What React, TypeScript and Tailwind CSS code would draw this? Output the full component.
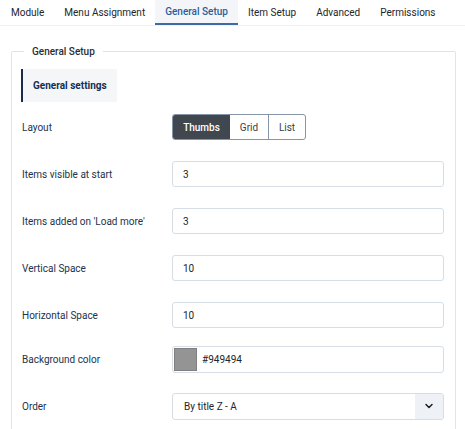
import React from 'react';

const tabs = ['Module', 'Menu Assignment', 'General Setup', 'Item Setup', 'Advanced', 'Permissions'];

const Row: React.FC<{ label: string; children: React.ReactNode; gap?: string }> = ({ label, children, gap = 'mb-[21px]' }) => (
  <div className={`flex items-center h-[26px] ${gap}`}>
    <div className="w-[151px] shrink-0 pl-[1px] text-[10px] text-[#22324a]">{label}</div>
    <div className="flex-1">{children}</div>
  </div>
);

const TextInput: React.FC<{ value: string }> = ({ value }) => (
  <div className="h-[26px] w-[272px] border border-[#d7dde5] rounded-[3px] bg-white flex items-center px-[10px] text-[10px] text-[#22262a]">
    {value}
  </div>
);

export default function App() {
  return (
    <div className="w-[465px] h-[429px] bg-white overflow-hidden font-['Roboto',sans-serif]">
      {/* Tabs */}
      <div className="flex h-[26px] border-b border-[#eef1f5] pl-[1px]">
        {tabs.map((t) => {
          const active = t === 'General Setup';
          return (
            <div
              key={t}
              className={`px-[10px] flex items-center whitespace-nowrap text-[10px] ${
                active
                  ? 'bg-[#f3f5f8] text-[#2c5d9a] border-b-2 border-[#3e6ba6] font-medium'
                  : 'text-[#22262a]'
              }`}
            >
              {t}
            </div>
          );
        })}
      </div>

      {/* Fieldset */}
      <fieldset className="mt-[18px] ml-[11px] w-[445px] border border-[#dfe4ea] rounded-[2px] px-[9px] pt-[10px] pb-[10px]">
        <legend className="ml-[3px] px-[8px] text-[10px] font-medium text-[#2a2e33]">General Setup</legend>

        <div className="inline-flex items-center h-[33px] bg-[#f5f6f8] border-l-2 border-[#1b2b4b] pl-[10px] pr-[10px] text-[10px] font-bold text-[#132f53]">
          General settings
        </div>

        <div className="mt-[12px]">
          <Row label="Layout">
            <div className="inline-flex h-[26px] rounded-[3px] border border-[#8795a8] overflow-hidden text-[10px]">
              <div className="w-[57px] flex items-center justify-center bg-[#41474e] text-white font-medium">Thumbs</div>
              <div className="w-[39px] flex items-center justify-center text-[#3a3f44] border-r border-[#8795a8]">Grid</div>
              <div className="w-[36px] flex items-center justify-center text-[#3a3f44]">List</div>
            </div>
          </Row>
          <Row label="Items visible at start">
            <TextInput value="3" />
          </Row>
          <Row label="Items added on 'Load more'">
            <TextInput value="3" />
          </Row>
          <Row label="Vertical Space">
            <TextInput value="10" />
          </Row>
          <Row label="Horizontal Space" gap="mb-[18px]">
            <TextInput value="10" />
          </Row>
          <Row label="Background color">
            <div className="h-[27px] w-[272px] border border-[#d7dde5] rounded-[3px] bg-white flex items-center pl-[1px] text-[10px] text-[#22262a]">
              <div className="w-[23px] h-[23px] bg-[#949494] border border-[#7f7f7f] mr-[5px]" />
              #949494
            </div>
          </Row>
          <Row label="Order">
            <div className="h-[27px] w-[272px] border border-[#d7dde5] rounded-[3px] bg-white flex items-center text-[10px] text-[#22262a] overflow-hidden">
              <div className="flex-1 pl-[11px]">By title Z - A</div>
              <div className="w-[28px] h-full bg-[#eef1f6] flex items-center justify-center">
                <svg width="10" height="10" viewBox="0 0 10 10" fill="none">
                  <path d="M2 3.5 L5 6.5 L8 3.5" stroke="#1c1f24" strokeWidth="1.5" strokeLinecap="round" strokeLinejoin="round" />
                </svg>
              </div>
            </div>
          </Row>
        </div>
      </fieldset>
    </div>
  );
}
